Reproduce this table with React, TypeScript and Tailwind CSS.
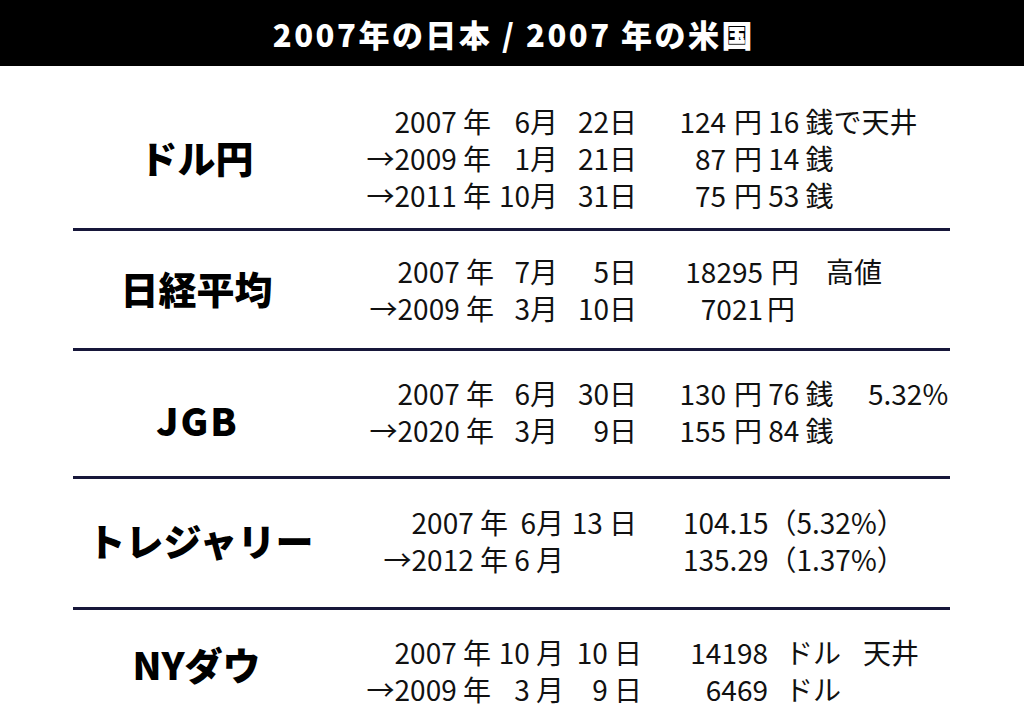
import React from 'react';

type Row = { yr: string; mo: string; dy: string; val: React.ReactNode };

const Label: React.FC<{ text: string; className: string }> = ({ text, className }) => (
  <div className={`w-[247px] shrink-0 text-center text-[38px] leading-[40px] font-black text-black ${className}`}>
    {text}
  </div>
);

const Rows: React.FC<{ rows: Row[]; grid: string; className: string }> = ({ rows, grid, className }) => (
  <div className={`flex-1 text-[28px] leading-[37px] text-[#111] ${className}`}>
    {rows.map((r, i) => (
      <div key={i} className={`grid ${grid} whitespace-pre`}>
        <span className="text-right">{r.yr}</span>
        <span className="text-right">{r.mo}</span>
        <span className="text-right">{r.dy}</span>
        <div className="flex">{r.val}</div>
      </div>
    ))}
  </div>
);

const App: React.FC = () => {
  return (
    <div className="w-[1024px] h-[724px] overflow-hidden bg-white font-['Noto_Sans_CJK_JP',sans-serif]">
      {/* title bar */}
      <div className="h-[66px] bg-black flex items-center justify-center">
        <h1 className="text-white text-[31px] font-black tracking-[2.5px] leading-none pl-1">
          2007年の日本 / 2007 年の米国
        </h1>
      </div>

      <div className="ml-[73px] w-[877px]">
        {/* ドル円 */}
        <section className="h-[165px] flex border-b-[3px] border-[#17173a]">
          <Label text="ドル円" className="pt-[71px]" />
          <Rows
            className="pt-[37px]"
            grid="grid-cols-[171px_67px_79px_1fr]"
            rows={[
              { yr: '2007 年', mo: '6月', dy: '22日', val: <><span className="w-[89px] text-right">124</span><span className="ml-2">円 16 銭で天井</span></> },
              { yr: '→2009 年', mo: '1月', dy: '21日', val: <><span className="w-[89px] text-right">87</span><span className="ml-2">円 14 銭</span></> },
              { yr: '→2011 年', mo: '10月', dy: '31日', val: <><span className="w-[89px] text-right">75</span><span className="ml-2">円 53 銭</span></> },
            ]}
          />
        </section>

        {/* 日経平均 */}
        <section className="h-[120px] flex border-b-[3px] border-[#17173a]">
          <Label text="日経平均" className="pt-[37px]" />
          <Rows
            className="pt-[22px]"
            grid="grid-cols-[174px_64px_79px_1fr]"
            rows={[
              { yr: '2007 年', mo: '7月', dy: '5日', val: <><span className="w-[126px] text-right">18295</span><span className="ml-2">円</span><span className="ml-[27px]">高値</span></> },
              { yr: '→2009 年', mo: '3月', dy: '10日', val: <><span className="w-[126px] text-right">7021</span><span className="ml-1">円</span></> },
            ]}
          />
        </section>

        {/* JGB */}
        <section className="h-[128px] flex border-b-[3px] border-[#17173a]">
          <Label text="JGB" className="pt-[49px] tracking-[2px] pl-[2px]" />
          <Rows
            className="pt-[24px]"
            grid="grid-cols-[174px_64px_79px_1fr]"
            rows={[
              { yr: '2007 年', mo: '6月', dy: '30日', val: <><span className="w-[89px] text-right">130</span><span className="ml-2 w-[134px]">円 76 銭</span><span>5.32%</span></> },
              { yr: '→2020 年', mo: '3月', dy: '9日', val: <><span className="w-[89px] text-right">155</span><span className="ml-2">円 84 銭</span></> },
            ]}
          />
        </section>

        {/* トレジャリー */}
        <section className="h-[131px] flex border-b-[3px] border-[#17173a]">
          <Label text="トレジャリー" className="pt-[41px] pl-2" />
          <Rows
            className="pt-[25px]"
            grid="grid-cols-[188px_56px_73px_1fr]"
            rows={[
              { yr: '2007 年', mo: '6月', dy: '13 日', val: <span className="pl-[46px]">104.15（5.32%）</span> },
              { yr: '→2012 年', mo: '6 月', dy: '', val: <span className="pl-[46px]">135.29（1.37%）</span> },
            ]}
          />
        </section>

        {/* NYダウ */}
        <section className="h-[114px] flex">
          <Label text="NYダウ" className="pt-[34px]" />
          <Rows
            className="pt-[24px]"
            grid="grid-cols-[171px_73px_78px_1fr]"
            rows={[
              { yr: '2007 年', mo: '10 月', dy: '10 日', val: <><span className="w-[126px] text-right">14198</span><span className="ml-[17px] w-[78px]">ドル</span><span>天井</span></> },
              { yr: '→2009 年', mo: '3 月', dy: '9 日', val: <><span className="w-[126px] text-right">6469</span><span className="ml-[17px]">ドル</span></> },
            ]}
          />
        </section>
      </div>
    </div>
  );
};

export default App;
